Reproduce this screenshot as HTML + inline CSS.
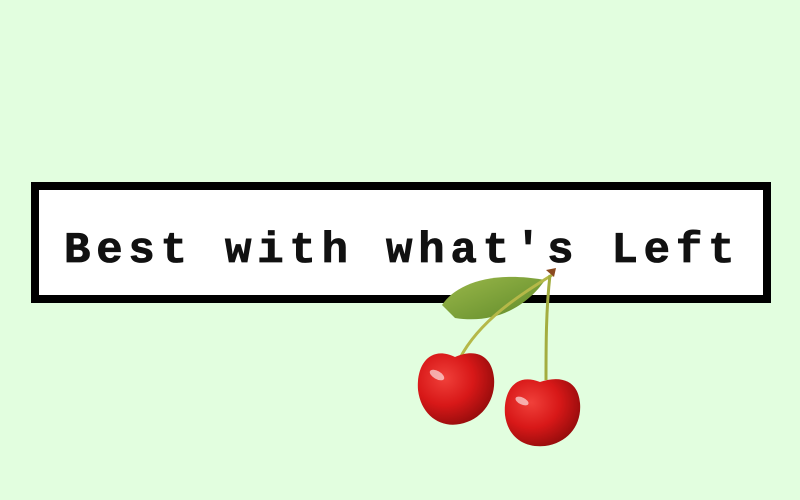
<!DOCTYPE html>
<html><head><style>
html,body{margin:0;padding:0}
body{width:800px;height:500px;background:#e2fedf;position:relative;overflow:hidden}
.box{position:absolute;left:31px;top:182px;width:724px;height:105px;border:8px solid #000;background:#fff}
.t{position:absolute;left:64px;top:221px;font:bold 44px/60px "Liberation Mono",monospace;letter-spacing:5.8px;color:#111;white-space:nowrap;-webkit-text-stroke:0.8px #111}
svg{position:absolute;left:0;top:0}
</style></head><body>
<div class="box"></div>
<div class="t">Best with what's Left</div>
<svg width="800" height="500">
<defs>
<radialGradient id="c" cx="0.35" cy="0.35" r="0.75">
<stop offset="0" stop-color="#f0403a"/><stop offset="0.5" stop-color="#d81818"/><stop offset="1" stop-color="#8a0a0a"/>
</radialGradient>
<linearGradient id="l" x1="0" y1="0" x2="1" y2="1"><stop offset="0" stop-color="#9bb84a"/><stop offset="1" stop-color="#5f8a2a"/></linearGradient>
</defs>
<path d="M442,305 C455,285 490,270 545,280 C530,302 500,325 455,318 Z" fill="url(#l)"/>
<path d="M460,358 C480,320 520,295 552,275" stroke="#b5b848" stroke-width="3" fill="none"/>
<path d="M550,275 C546,310 546,345 546,380" stroke="#a3ad40" stroke-width="3" fill="none"/>
<path d="M546,270 L556,268 L554,277 Z" fill="#8a4a20"/>
<path d="M455,357 C430,345 416,365 418,390 C421,415 440,428 460,424 C482,420 496,400 494,378 C492,355 475,348 455,357 Z" fill="url(#c)"/>
<path d="M540,382 C515,372 503,392 505,415 C508,438 525,448 545,446 C568,443 582,425 580,403 C578,380 560,375 540,382 Z" fill="url(#c)"/>
<ellipse cx="437" cy="375" rx="8" ry="4" fill="#fff" opacity="0.6" transform="rotate(30 437 375)"/>
<ellipse cx="522" cy="401" rx="7" ry="3.5" fill="#fff" opacity="0.6" transform="rotate(25 522 401)"/>
</svg>
</body></html>
